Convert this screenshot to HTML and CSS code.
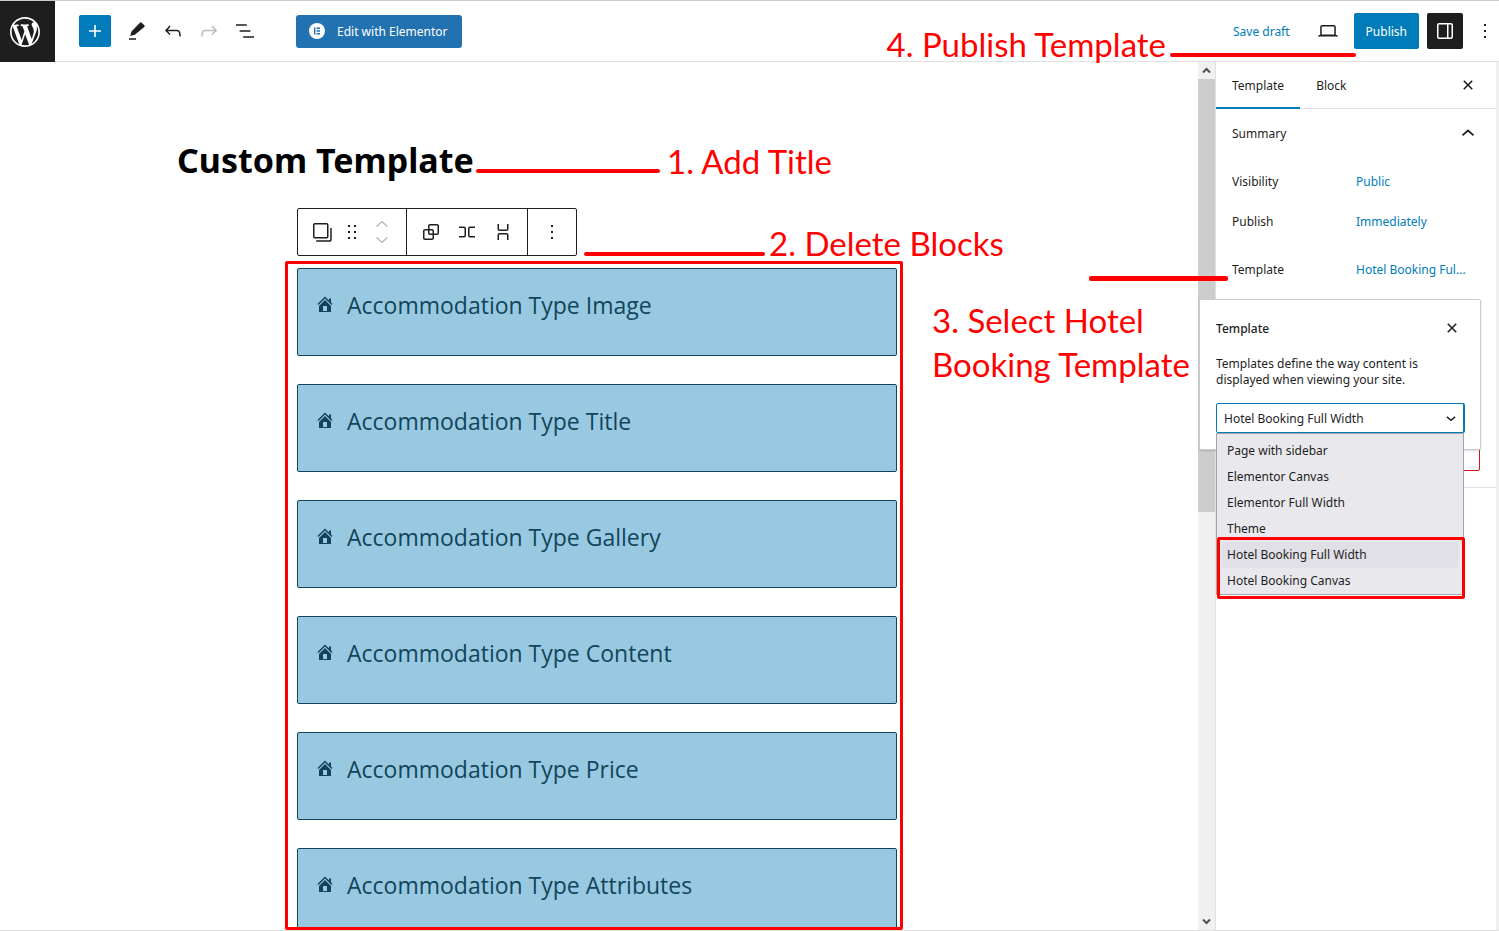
FILE: index.html
```html
<!DOCTYPE html>
<html lang="en">
<head>
    <meta charset="UTF-8">
    <meta name="viewport" content="width=device-width, initial-scale=1.0">
    <title>Custom Template</title>
    <link rel="stylesheet" href="styles.css">
</head>
<body>
    <!-- Shared icon shapes -->
    <svg class="sprite" aria-hidden="true">
        <symbol id="icon-home" viewBox="0 0 20 20">
            <path d="M16 8.5l1.53 1.53-1.06 1.06L10 4.6l-6.47 6.49-1.06-1.06L10 2.5l4 4v-2h2v4zm-6-2.46l6 5.99V18H4v-5.97zM12 17v-5H8v5h4z"/>
        </symbol>
        <symbol id="icon-close" viewBox="0 0 24 24">
            <path d="M12 13.06l3.712 3.713 1.061-1.06L13.061 12l3.712-3.712-1.06-1.06L12 10.938 8.288 7.227l-1.061 1.06L10.939 12l-3.712 3.712 1.06 1.061L12 13.061z"/>
        </symbol>
        <symbol id="icon-more" viewBox="0 0 24 24">
            <path d="M13 19h-2v-2h2v2zm0-6h-2v-2h2v2zm0-6h-2V5h2v2z"/>
        </symbol>
    </svg>

    <header class="topbar">
        <a class="wp-logo" href="#" aria-label="View posts">
            <svg width="36" height="36" viewBox="-2 -2 24 24"><path d="M20 10c0-5.51-4.49-10-10-10C4.48 0 0 4.49 0 10c0 5.52 4.48 10 10 10 5.51 0 10-4.48 10-10zM7.78 15.37L4.37 6.22c.55-.02 1.17-.08 1.17-.08.5-.06.44-1.13-.06-1.11 0 0-1.45.11-2.37.11-.18 0-.37 0-.58-.01C4.12 2.69 6.87 1.11 10 1.11c2.33 0 4.45.87 6.05 2.34-.68-.11-1.65.39-1.65 1.58 0 .74.45 1.36.9 2.1.35.61.55 1.36.55 2.46 0 1.49-1.4 5-1.4 5l-3.03-8.37c.54-.02.82-.17.82-.17.5-.05.44-1.25-.06-1.22 0 0-1.44.12-2.38.12-.87 0-2.33-.12-2.33-.12-.5-.03-.56 1.2-.06 1.22l.92.08 1.26 3.41zM17.41 10c.24-.64.74-1.87.43-4.25.7 1.29 1.05 2.71 1.05 4.25 0 3.29-1.73 6.24-4.4 7.78.97-2.59 1.94-5.2 2.92-7.78zM6.1 18.09C3.12 16.65 1.11 13.53 1.11 10c0-1.3.23-2.48.72-3.59C3.25 10.3 4.67 14.2 6.1 18.09zm4.03-6.63l2.58 6.98c-.86.29-1.76.45-2.71.45-.79 0-1.57-.11-2.29-.33.81-2.38 1.62-4.74 2.42-7.1z"/></svg>
        </a>
        <div class="topbar-tools">
            <button class="inserter" aria-label="Add block">
                <svg width="24" height="24" viewBox="0 0 24 24"><path d="M18 11.2h-5.2V6h-1.6v5.2H6v1.6h5.2V18h1.6v-5.2H18z"/></svg>
            </button>
            <button class="icon-btn" aria-label="Tools">
                <svg width="24" height="24" viewBox="0 0 24 24"><path d="M19.3 6.300L16.700 3.700a1.200 1.200 0 0 0-1.800 0L6.500 12.600l-1.300 4.500 4.600-1.300 9.500-7.800c.5-.5.500-1.200 0-1.700zM4 20.800h7v-1.500H4v1.500z"/></svg>
            </button>
            <button class="icon-btn" aria-label="Undo">
                <svg width="24" height="24" viewBox="0 0 24 24"><path d="M18.3 11.7c-.6-.6-1.4-.9-2.3-.9H6.7l2.9-3.3-1.1-1-4.5 5L8.5 16l1-1-2.7-2.7H16c.5 0 .9.2 1.3.5 1 1 1 3.4 1 4.5v.3h1.5v-.2c0-1.5 0-4.3-1.5-5.7z"/></svg>
            </button>
            <button class="icon-btn muted" aria-label="Redo">
                <svg width="24" height="24" viewBox="0 0 24 24"><path d="M15.6 6.5l-1.1 1 2.9 3.3H8c-.9 0-1.7.3-2.3.9-1.4 1.5-1.4 4.2-1.4 5.6v.2h1.5v-.3c0-1.1 0-3.5 1-4.5.3-.3.7-.5 1.3-.5h9.2L14.5 15l1.1 1.1 4.6-4.6-4.6-5z"/></svg>
            </button>
            <button class="icon-btn" aria-label="List view">
                <svg width="24" height="24" viewBox="0 0 24 24"><path d="M13.8 5.2H3v1.5h10.8V5.2zm-3.6 12v1.5H21v-1.5H10.2zm7.2-6H6.6v1.5h10.8v-1.5z"/></svg>
            </button>
        </div>
        <button class="elementor-btn">
            <svg width="16" height="16" viewBox="0 0 16 16"><circle cx="8" cy="8" r="8" fill="#fff"/><path fill="#2271b1" d="M5 4.5h1.4v7H5zM7.5 4.5H11v1.4H7.5zM7.5 7.3H11v1.4H7.5zM7.5 10.1H11v1.4H7.5z"/></svg>
            <span>Edit with Elementor</span>
        </button>
        <div class="topbar-actions">
            <button class="link-btn save-draft">Save draft</button>
            <button class="icon-btn preview" aria-label="Preview">
                <svg width="24" height="24" viewBox="0 0 24 24"><path d="M20.5 16h-.7V8c0-1.1-.9-2-2-2H6.2c-1.1 0-2 .9-2 2v8h-.7c-.8 0-1.5.7-1.5 1.5h20c0-.8-.7-1.5-1.5-1.5zM5.7 8c0-.3.2-.5.5-.5h11.6c.3 0 .5.2.5.5v7.6H5.7V8z"/></svg>
            </button>
            <button class="publish-btn">Publish</button>
            <button class="icon-btn settings-btn" aria-label="Settings">
                <svg width="24" height="24" viewBox="0 0 24 24"><path d="M18 4H6c-1.1 0-2 .9-2 2v12c0 1.1.9 2 2 2h12c1.1 0 2-.9 2-2V6c0-1.1-.9-2-2-2zm-4 14.5H6c-.3 0-.5-.2-.5-.5V6c0-.3.2-.5.5-.5h8v13zm4.5-.5c0 .3-.2.5-.5.5h-2.5v-13H18c.3 0 .5.2.5.5v12z"/></svg>
            </button>
            <button class="icon-btn options-btn" aria-label="Options">
                <svg width="24" height="24"><use href="#icon-more"/></svg>
            </button>
        </div>
        <p class="note note-publish">4. Publish Template</p>
        <span class="rule rule-publish"></span>
    </header>

    <div class="editor">
        <main class="canvas">
            <div class="content">
                <h1>Custom Template</h1>
                <span class="rule rule-title"></span>
                <p class="note note-title">1. Add Title</p>

                <div class="blocks">
                    <div class="toolbar" role="toolbar" aria-label="Block tools">
                        <div class="toolbar-group">
                            <button class="icon-btn" aria-label="Select blocks">
                                <svg width="24" height="24" viewBox="0 0 24 24" fill="none" stroke="currentColor" stroke-width="1.5"><rect x="3.75" y="3.75" width="14" height="14" rx="1"/><path d="M21 8v11.2c0 1-.8 1.8-1.8 1.8H6.200"/></svg>
                            </button>
                            <button class="icon-btn drag" aria-label="Drag">
                                <svg width="24" height="24" viewBox="0 0 24 24"><path d="M8 7h2V5H8v2zm0 6h2v-2H8v2zm0 6h2v-2H8v2zm6-14v2h2V5h-2zm0 8h2v-2h-2v2zm0 6h2v-2h-2v2z"/></svg>
                            </button>
                            <button class="icon-btn muted" aria-label="Move">
                                <svg width="24" height="24" viewBox="0 0 24 24" fill="none" stroke="currentColor" stroke-width="1.5"><path d="M6.500 6.500L12 1.700l5.500 4.800M6.500 17.500l5.500 4.800 5.500-4.800"/></svg>
                            </button>
                        </div>
                        <div class="toolbar-group">
                            <button class="icon-btn" aria-label="Group">
                                <svg width="24" height="24" viewBox="0 0 24 24"><path d="M18 4h-7c-1.1 0-2 .9-2 2v3H6c-1.1 0-2 .9-2 2v7c0 1.1.9 2 2 2h7c1.1 0 2-.9 2-2v-3h3c1.1 0 2-.9 2-2V6c0-1.1-.9-2-2-2zm-4.500 14c0 .3-.2.5-.5.5H6c-.3 0-.5-.2-.5-.5v-7c0-.3.2-.5.5-.5h3V13c0 1.1.9 2 2 2h2.500v3zm0-4.500H11c-.3 0-.5-.2-.5-.5v-2.500H13c.3 0 .5.2.5.5v2.500zm5-.5c0 .3-.2.5-.5.5h-3V11c0-1.100-.9-2-2-2h-2.500V6c0-.3.2-.5.5-.5h7c.3 0 .5.2.5.5v7z"/></svg>
                            </button>
                            <button class="icon-btn" aria-label="Row">
                                <svg width="24" height="24" viewBox="0 0 24 24"><path d="M4 6.500h5a2 2 0 0 1 2 2v7a2 2 0 0 1-2 2H4V16h5a.5.5 0 0 0 .5-.5v-7A.5.5 0 0 0 9 8H4V6.500Zm16 0h-5a2 2 0 0 0-2 2v7a2 2 0 0 0 2 2h5V16h-5a.5.5 0 0 1-.5-.5v-7A.5.5 0 0 1 15 8h5V6.500Z"/></svg>
                            </button>
                            <button class="icon-btn" aria-label="Stack">
                                <svg width="24" height="24" viewBox="0 0 24 24"><path d="M17.500 4v5a2 2 0 0 1-2 2h-7a2 2 0 0 1-2-2V4H8v5a.5.5 0 0 0 .5.5h7A.5.5 0 0 0 16 9V4h1.500Zm0 16v-5a2 2 0 0 0-2-2h-7a2 2 0 0 0-2 2v5H8v-5a.5.5 0 0 1 .5-.5h7a.5.5 0 0 1 .5.5v5h1.500Z"/></svg>
                            </button>
                        </div>
                        <div class="toolbar-group">
                            <button class="icon-btn" aria-label="Options">
                                <svg width="24" height="24"><use href="#icon-more"/></svg>
                            </button>
                        </div>
                    </div>
                    <span class="rule rule-delete"></span>
                    <p class="note note-delete">2. Delete Blocks</p>

                    <div class="block-list">
                        <div class="block"><svg width="20" height="20"><use href="#icon-home"/></svg>Accommodation Type Image</div>
                        <div class="block"><svg width="20" height="20"><use href="#icon-home"/></svg>Accommodation Type Title</div>
                        <div class="block"><svg width="20" height="20"><use href="#icon-home"/></svg>Accommodation Type Gallery</div>
                        <div class="block"><svg width="20" height="20"><use href="#icon-home"/></svg>Accommodation Type Content</div>
                        <div class="block"><svg width="20" height="20"><use href="#icon-home"/></svg>Accommodation Type Price</div>
                        <div class="block"><svg width="20" height="20"><use href="#icon-home"/></svg>Accommodation Type Attributes</div>
                    </div>
                </div>
            </div>
        </main>

        <div class="scrollbar" aria-hidden="true">
            <svg width="17" height="17" viewBox="0 0 17 17"><path d="M5 10.500L8.500 7l3.500 3.500"/></svg>
            <div class="thumb"></div>
            <svg width="17" height="17" viewBox="0 0 17 17"><path d="M5 6.500L8.500 10 12 6.500"/></svg>
        </div>

        <aside class="sidebar">
            <div class="tabs">
                <button class="tab active">Template</button>
                <button class="tab">Block</button>
                <button class="icon-btn tabs-close" aria-label="Close settings">
                    <svg width="24" height="24"><use href="#icon-close"/></svg>
                </button>
            </div>
            <section class="panel">
                <button class="panel-title">
                    Summary
                    <svg width="24" height="24" viewBox="0 0 24 24" fill="none" stroke="currentColor" stroke-width="1.700"><path d="M6.500 13.300L12 8.500l5.500 4.800"/></svg>
                </button>
                <div class="row"><span>Visibility</span><button class="link-btn">Public</button></div>
                <div class="row"><span>Publish</span><button class="link-btn">Immediately</button></div>
                <div class="row row-template">
                    <span>Template</span><button class="link-btn">Hotel Booking Ful...</button>
                    <div class="popover">
                        <div class="popover-head">
                            <h2>Template</h2>
                            <button class="icon-btn" aria-label="Close">
                                <svg width="24" height="24"><use href="#icon-close"/></svg>
                            </button>
                        </div>
                        <p>Templates define the way content is displayed when viewing your site.</p>
                        <div class="select-wrap">
                            <select aria-label="Template">
                                <option>Hotel Booking Full Width</option>
                            </select>
                            <svg width="18" height="18" viewBox="0 0 24 24" fill="none" stroke="currentColor" stroke-width="2"><path d="M6.500 10.500L12 15l5.500-4.500"/></svg>
                            <ul class="options" role="listbox" aria-label="Template options">
                                <li role="option">Page with sidebar</li>
                                <li role="option">Elementor Canvas</li>
                                <li role="option">Elementor Full Width</li>
                                <li role="option">Theme</li>
                                <li role="option" class="selected" aria-selected="true">Hotel Booking Full Width</li>
                                <li role="option">Hotel Booking Canvas</li>
                            </ul>
                            <span class="options-frame"></span>
                        </div>
                    </div>
                </div>
                <button class="trash" aria-label="Move to trash"></button>
            </section>
            <span class="rule rule-template"></span>
            <p class="note note-template">3. Select Hotel<br>Booking Template</p>
        </aside>
    </div>
</body>
</html>
```
FILE: styles.css
```css
* {
    box-sizing: border-box;
}

body {
    font-family: "Noto Sans", sans-serif;
    font-size: 12px;
    line-height: 16px;
    margin: 0;
    color: #1e1e1e;
    background: #fff;
    height: 100vh;
    display: flex;
    flex-direction: column;
    overflow: hidden;
}

h1, h2, p, ul {
    margin: 0;
    padding: 0;
}

button, select {
    font: inherit;
    color: inherit;
    border: none;
    padding: 0;
    background: none;
    border-radius: 2px;
    cursor: pointer;
}

svg {
    fill: currentColor;
    flex: none;
}

svg[fill="none"] {
    fill: none;
}

.sprite {
    position: absolute;
    width: 0;
    height: 0;
}

.icon-btn {
    width: 36px;
    height: 36px;
    display: flex;
    align-items: center;
    justify-content: center;
}

.muted {
    color: #bbb;
}

.link-btn {
    color: #007cba;
}

/* Top bar */
.topbar {
    position: relative;
    height: 62px;
    flex: none;
    display: flex;
    align-items: center;
    border-top: 1px solid #ccc;
    border-bottom: 1px solid #e0e0e0;
}

.wp-logo {
    width: 55px;
    height: 61px;
    margin-bottom: -1px;
    padding-left: 7px;
    display: flex;
    align-items: center;
    background: #1e1e1e;
    color: #fff;
}

.topbar-tools {
    display: flex;
    align-items: center;
    margin-left: 24px;
}

.inserter {
    width: 32px;
    height: 32px;
    margin-right: 8px;
    display: flex;
    align-items: center;
    justify-content: center;
    background: #007cba;
    color: #fff;
}

.elementor-btn {
    height: 33px;
    margin-left: 33px;
    padding: 0 14px 0 13px;
    display: flex;
    align-items: center;
    gap: 12px;
    background: #2271b1;
    color: #fff;
    border-radius: 3px;
}

.elementor-btn span {
    padding-top: 2px;
}

.topbar-actions {
    display: flex;
    align-items: center;
    margin-left: auto;
}

.save-draft {
    padding-top: 2px;
}

.preview {
    margin: 0 8px 0 20px;
}

.publish-btn {
    height: 36px;
    padding: 2px 12px 0;
    background: #007cba;
    color: #fff;
}

.settings-btn {
    margin-left: 8px;
    background: #1e1e1e;
    color: #fff;
}

.options-btn {
    margin: 0 -4px 0 4px;
}

/* Editor area */
.editor {
    flex: 1;
    min-height: 0;
    display: flex;
    border-bottom: 1px solid #e0e0e0;
}

.canvas {
    flex: 1;
    padding: 74px 4px 0 0;
}

.content {
    position: relative;
    max-width: 840px;
    height: 100%;
    margin: 0 auto;
    display: flex;
    flex-direction: column;
}

h1 {
    font-size: 34px;
    line-height: 48px;
    color: #000;
}

.blocks {
    position: relative;
    width: 600px;
    flex: 1;
    min-height: 0;
    margin: 24px auto 0;
    display: flex;
    flex-direction: column;
}

.toolbar {
    align-self: flex-start;
    height: 48px;
    display: flex;
    border: 1px solid #1e1e1e;
    border-radius: 2px;
}

.toolbar-group {
    display: flex;
    align-items: center;
    padding: 0 6px;
}

.toolbar-group + .toolbar-group {
    border-left: 1px solid #1e1e1e;
}

.drag {
    width: 24px;
}

.block-list {
    flex: 1;
    min-height: 0;
    margin: 5px -6px 0 -12px;
    padding: 4px 3px 0 9px;
    border: 3px solid #f00;
    border-radius: 2px;
    overflow: hidden;
}

.block {
    height: 88px;
    margin-bottom: 28px;
    padding: 20px 17px;
    display: flex;
    gap: 12px;
    font-family: "Open Sans", "Noto Sans", sans-serif;
    font-size: 23px;
    line-height: 32px;
    color: #12455b;
    background: #99c9e0;
    border: 1px solid #12455b;
    border-radius: 2px;
}

.block svg {
    margin-top: 5px;
}

.scrollbar {
    width: 17px;
    display: flex;
    flex-direction: column;
    background: #f0f0f0;
}

.scrollbar svg {
    fill: none;
    stroke: #505050;
    stroke-width: 2;
}

.thumb {
    height: 433px;
    margin-bottom: auto;
    background: #cdcdcd;
}

/* Settings sidebar */
.sidebar {
    position: relative;
    width: 284px;
    border-left: 1px solid #e0e0e0;
    border-right: 3px solid #f0f0f0;
}

.tabs {
    height: 47px;
    display: flex;
    border-bottom: 1px solid #e0e0e0;
}

.tab {
    height: 47px;
    padding: 1px 16px 0;
    border-radius: 0;
}

.tab.active {
    border-bottom: 2px solid #007cba;
    padding-top: 3px;
}

.tabs-close {
    margin: 5px 10px 0 auto;
}

.panel {
    padding: 0 16px 16px;
    border-bottom: 1px solid #e0e0e0;
}

.panel-title {
    width: 100%;
    height: 51px;
    padding-bottom: 1px;
    display: flex;
    align-items: center;
    justify-content: space-between;
}

.row {
    position: relative;
    height: 36px;
    margin-top: 4px;
    display: grid;
    grid-template-columns: 124px 1fr;
    align-items: center;
    justify-items: start;
}

.row-template {
    margin-top: 12px;
}

.trash {
    display: block;
    width: 100%;
    height: 36px;
    margin-top: 147px;
    border: 1px solid #cc1818;
}

.popover {
    position: absolute;
    top: 47px;
    right: -1px;
    z-index: 2;
    width: 282px;
    height: 151px;
    padding: 10px 16px;
    background: #fff;
    border: 1px solid #ccc;
    border-radius: 2px;
    box-shadow: 0 1px 2px rgba(0, 0, 0, 0.15);
}

.popover-head {
    display: flex;
    align-items: center;
    justify-content: space-between;
}

.popover-head .icon-btn {
    margin-right: -6px;
}

.popover h2 {
    padding-top: 2px;
    font-size: 12px;
    font-weight: 500;
}

.popover p {
    margin-top: 10px;
}

.select-wrap {
    position: relative;
    margin-top: 15px;
}

.select-wrap svg {
    position: absolute;
    top: 6px;
    right: 4px;
    pointer-events: none;
}

select {
    appearance: none;
    width: 100%;
    height: 30px;
    padding: 2px 7px 0;
    background: #fff;
    border: 1px solid #007cba;
    box-shadow: 1px 0 #007cba;
}

.options {
    position: absolute;
    top: 100%;
    left: 0;
    width: 100%;
    padding: 4px 5px 0;
    list-style: none;
    background: #e9e9ed;
    border: 1px solid #a5a5aa;
}

.options li {
    height: 26px;
    padding: 0 5px;
    line-height: 26px;
    border-radius: 2px;
}

.options .selected {
    background: #e0e0e6;
}

.options-frame {
    position: absolute;
    top: 134px;
    left: 1px;
    width: 248px;
    height: 62px;
    border: 3px solid #f00;
    border-radius: 2px;
}

/* Red step notes and their lines */
.note {
    position: absolute;
    z-index: 3;
    font-family: Lato, sans-serif;
    font-size: 33px;
    line-height: 44px;
    color: #f00;
    white-space: nowrap;
}

.rule {
    position: absolute;
    z-index: 3;
    height: 4px;
    background: #f00;
    border-radius: 2px;
}

.note-publish {
    top: 21px;
    right: 333px;
}

.rule-publish {
    top: 52px;
    right: 143px;
    width: 186px;
}

.note-title {
    top: 3px;
    left: 490px;
}

.rule-title {
    top: 33px;
    left: 299px;
    width: 184px;
}

.note-delete {
    top: 13px;
    left: 472px;
}

.rule-delete {
    top: 44px;
    left: 287px;
    width: 181px;
}

.note-template {
    top: 236px;
    left: -284px;
}

.rule-template {
    top: 214px;
    left: -127px;
    width: 139px;
    height: 5px;
}
```
